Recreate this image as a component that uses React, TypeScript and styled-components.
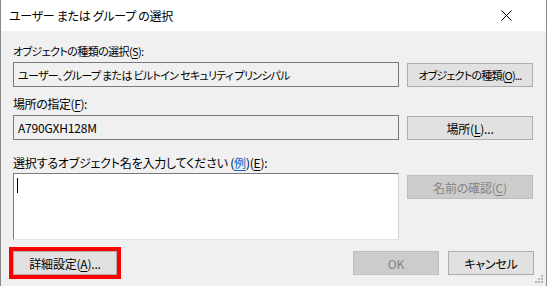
import React from "react";
import styled, { createGlobalStyle } from "styled-components";

const Global = createGlobalStyle`
  html, body { margin: 0; padding: 0; background: #f0f0f0; }
  body {
    font-family: "Noto Sans CJK JP", "Noto Sans", sans-serif;
    font-size: 12px;
    color: #000;
    font-feature-settings: "palt";
  }
`;

const Window = styled.div`
  width: 547px;
  height: 286px;
  box-sizing: border-box;
  border-left: 1px solid #8a8a8a;
  border-right: 1px solid #8a8a8a;
  background: #f0f0f0;
  display: flex;
  flex-direction: column;
  overflow: hidden;
  position: relative;
`;

const TitleBar = styled.div`
  height: 31px;
  flex: none;
  background: #fff;
  display: flex;
  align-items: center;
  justify-content: space-between;
  padding: 0 34px 0 8px;
  font-size: 12px;
  letter-spacing: -0.3px;
`;

const Title = styled.span`
  line-height: 16px;
`;

const Body = styled.div`
  display: flex;
  flex-direction: column;
  padding: 12px 12px 0 12px;
`;

const Label = styled.div<{ $mt?: number; $fs?: number; $ls?: number }>`
  line-height: 16px;
  height: 16px;
  margin-top: ${(p) => p.$mt ?? 0}px;
  white-space: nowrap;
  font-size: ${(p) => p.$fs ?? 12}px;
  letter-spacing: ${(p) => p.$ls ?? -0.2}px;
`;

const Row = styled.div<{ $mt?: number }>`
  display: grid;
  grid-template-columns: 386px 126px;
  column-gap: 8px;
  margin-top: ${(p) => p.$mt ?? 0}px;
  align-items: start;
`;

const Field = styled.div<{ $fs?: number; $ls?: number }>`
  height: 25px;
  box-sizing: border-box;
  border: 1px solid #7a7a7a;
  background: #f0f0f0;
  display: flex;
  align-items: center;
  padding: 0 4px;
  white-space: pre;
  overflow: hidden;
  font-size: ${(p) => p.$fs ?? 12}px;
  letter-spacing: ${(p) => p.$ls ?? -0.2}px;
`;

const Area = styled.div`
  height: 67px;
  box-sizing: border-box;
  border-top: 1px solid #7a7a7a;
  border-left: 1px solid #7a7a7a;
  border-right: 1px solid #d0d0d0;
  border-bottom: 1px solid #e3e3e3;
  background: #fff;
  padding: 4px 3px;
`;

const Caret = styled.div`
  width: 1px;
  height: 15px;
  background: #000;
`;

const Button = styled.div<{ $disabled?: boolean; $w?: number; $mt?: number; $fs?: number; $ls?: number }>`
  height: 24px;
  width: ${(p) => (p.$w ? `${p.$w}px` : "auto")};
  margin-top: ${(p) => p.$mt ?? 0}px;
  box-sizing: border-box;
  border: 1px solid ${(p) => (p.$disabled ? "#bfbfbf" : "#adadad")};
  background: ${(p) => (p.$disabled ? "#cccccc" : "#e1e1e1")};
  color: ${(p) => (p.$disabled ? "#838383" : "#000")};
  display: flex;
  align-items: center;
  justify-content: center;
  white-space: nowrap;
  overflow: hidden;
  font-size: ${(p) => p.$fs ?? 12}px;
  letter-spacing: ${(p) => p.$ls ?? -0.2}px;
`;

const U = styled.span`
  text-decoration: underline;
  text-underline-offset: 2px;
`;

const Link = styled.span`
  color: #0066cc;
  text-decoration: underline;
  text-underline-offset: 2px;
`;

const Footer = styled.div`
  display: flex;
  align-items: center;
  margin-top: 7px;
  margin-left: -4px;
`;

const Highlight = styled.div`
  border: 4px solid #ff0000;
  display: flex;
`;

const FooterRight = styled.div`
  margin-left: auto;
  display: flex;
  gap: 9px;
`;

const Grip = styled.svg`
  position: absolute;
  right: 2px;
  bottom: 2px;
`;

export default function App() {
  return (
    <>
      <Global />
      <Window>
        <TitleBar>
          <Title>ユーザー または グループ の選択</Title>
          <svg width="11" height="11" viewBox="0 0 11 11">
            <path d="M0.5 0.5 L10.5 10.5 M10.5 0.5 L0.5 10.5" stroke="#000" strokeWidth="1" fill="none" />
          </svg>
        </TitleBar>
        <Body>
          <Label $mt={0} $fs={11} $ls={-0.6}>
            オブジェクトの種類の選択(<U>S</U>):
          </Label>
          <Row $mt={3}>
            <Field $fs={11} $ls={-0.7}>ユーザー、グループ または ビルトイン セキュリティ プリンシパル</Field>
            <Button $mt={1} $fs={11} $ls={-0.8}>
              オブジェクトの種類(<U>O</U>)...
            </Button>
          </Row>
          <Label $mt={9} $ls={-0.4}>
            場所の指定(<U>F</U>):
          </Label>
          <Row $mt={3}>
            <Field>A790GXH128M</Field>
            <Button $mt={1}>
              場所(<U>L</U>)...
            </Button>
          </Row>
          <Label $mt={15}>
            選択するオブジェクト名を入力してください (<Link>例</Link>)(<U>E</U>):
          </Label>
          <Row $mt={2}>
            <Area>
              <Caret />
            </Area>
            <Button $disabled $mt={2}>
              名前の確認(<U>C</U>)
            </Button>
          </Row>
          <Footer>
            <Highlight>
              <Button $w={104}>
                詳細設定(<U>A</U>)...
              </Button>
            </Highlight>
            <FooterRight>
              <Button $disabled $w={86}>
                OK
              </Button>
              <Button $w={86}>キャンセル</Button>
            </FooterRight>
          </Footer>
        </Body>
        <Grip width="9" height="9" viewBox="0 0 9 9">
          <rect x="6" y="0" width="2" height="2" fill="#b5b5b5" />
          <rect x="3" y="3" width="2" height="2" fill="#b5b5b5" />
          <rect x="6" y="3" width="2" height="2" fill="#b5b5b5" />
          <rect x="0" y="6" width="2" height="2" fill="#b5b5b5" />
          <rect x="3" y="6" width="2" height="2" fill="#b5b5b5" />
          <rect x="6" y="6" width="2" height="2" fill="#b5b5b5" />
        </Grip>
      </Window>
    </>
  );
}
